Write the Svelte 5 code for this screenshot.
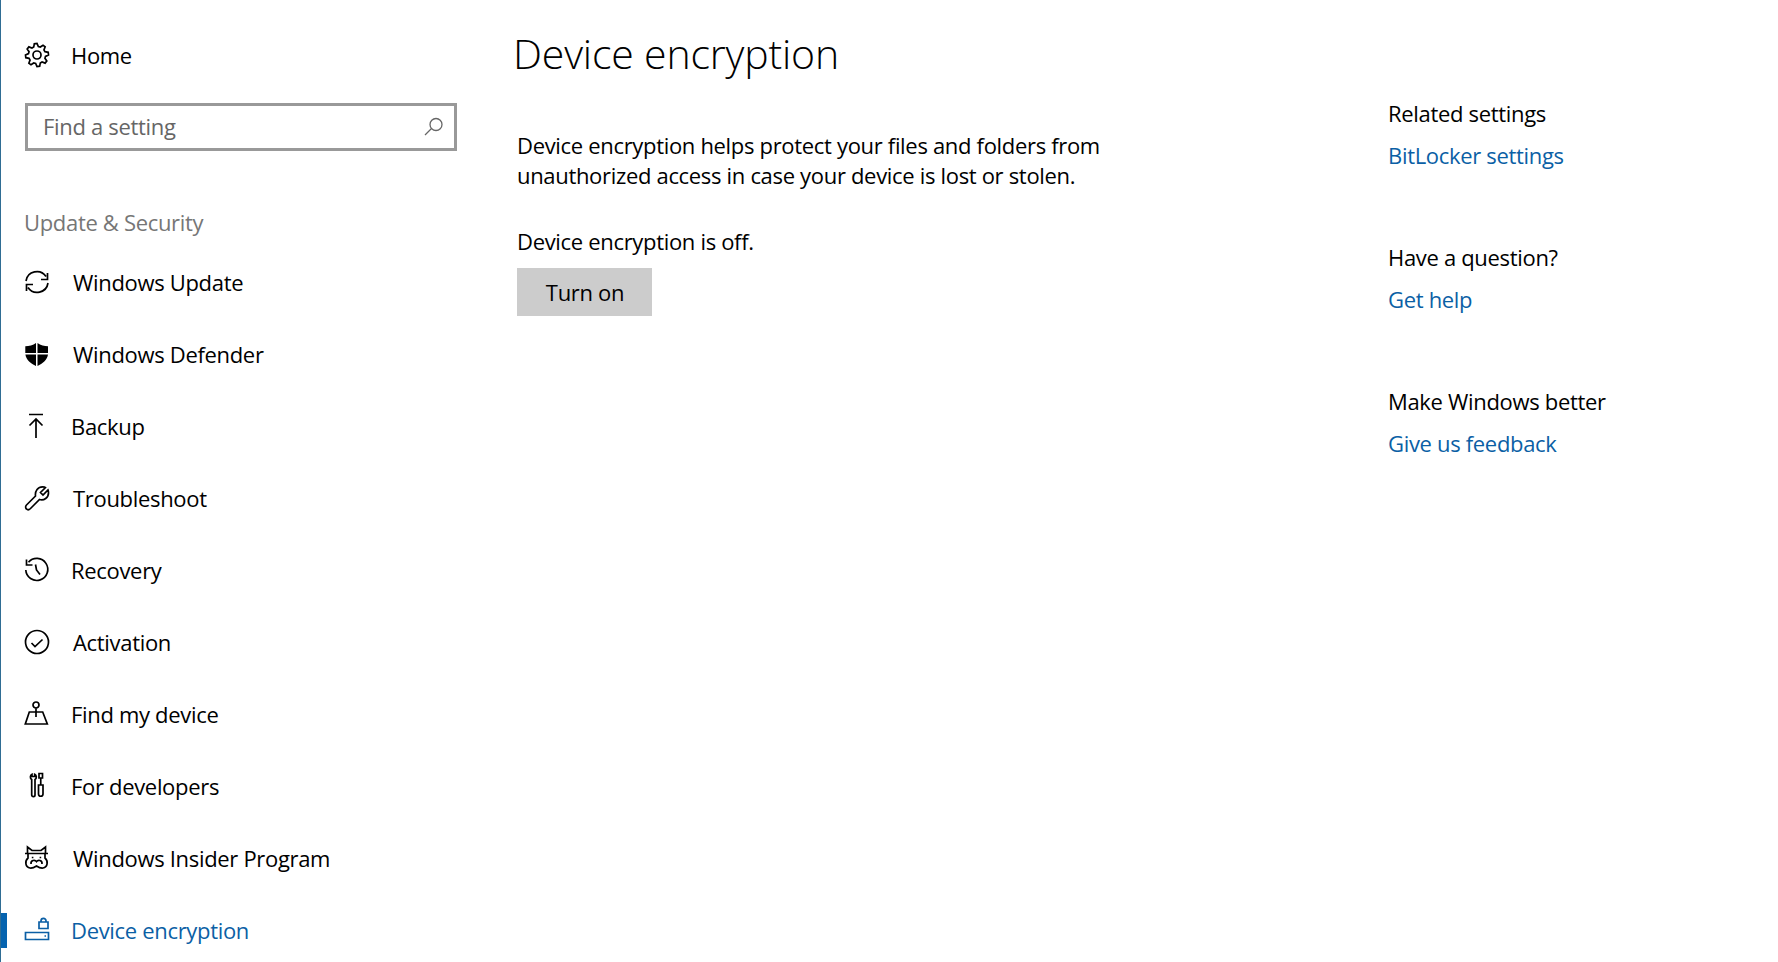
<script>
  // eight toothed gear outline, box is 24x24
  function gearPath(cx, cy, outer, inner) {
    let d = '';
    for (let i = 0; i < 8; i++) {
      const a = (i * Math.PI) / 4 - Math.PI / 8;
      const step = Math.PI / 4;
      const pts = [
        [inner, a + step * 0.0],
        [outer, a + step * 0.2],
        [outer, a + step * 0.5],
        [inner, a + step * 0.7]
      ];
      for (const [r, t] of pts) {
        const x = (cx + r * Math.cos(t)).toFixed(2);
        const y = (cy + r * Math.sin(t)).toFixed(2);
        d += (d ? 'L' : 'M') + x + ' ' + y;
      }
    }
    return d + 'Z';
  }

  const nav = [
    { label: 'Windows Update', tx: 1, d: 'M1 11A11 11 0 0 1 21 6.5M22.5 3V9.5H16M23 13A11 11 0 0 1 3 17.5M1.5 21V14.5H8' },
    { label: 'Windows Defender', tx: 1, solid: true, d: 'M11 1C8 3.2 4 4.3 .3 4.3V11H11ZM12.5 1C15.5 3.2 19.5 4.3 23 4.3V11H12.5ZM.4 12.5C1.2 18 6 21.5 11 24V12.5ZM12.5 12.5V24C17.5 21.5 22.2 18 23 12.5Z' },
    { label: 'Backup', tx: 0, d: 'M4 .5H18M11 5V24M4.5 11.5L11 5L17.5 11.5' },
    { label: 'Troubleshoot', tx: 1, d: 'M1.5 19L10.5 10C9.8 5 13 .8 17.5 .8C18.8 .8 20 1 20.5 1.5L15.5 6.5L18 9L23 4C23.5 5 23.5 6 23.5 7C23.5 11.5 19 15 14.5 13.5L5.5 22.5C4 24 2.5 24 1.5 23C.3 22 .3 20.3 1.5 19Z' },
    { label: 'Recovery', tx: 0, d: 'M3.5 4.2A11 11 0 1 1 .8 12M1.5 1.5V7H7.5M10.5 6.5L11.5 12L15 16.5' },
    { label: 'Activation', tx: 1, d: 'M23.5 12A11.5 11.5 0 1 1 .5 12A11.5 11.5 0 1 1 23.5 12ZM6.5 13L10 16.5L17.5 9.5' },
    { label: 'Find my device', tx: 0, d: 'M14 3A3 3 0 1 1 8 3A3 3 0 1 1 14 3ZM11 6V15M4.3 10H17.7L22.3 22H.3Z' },
    { label: 'For developers', tx: 0, d: 'M6.7 5.5C4.8 4.5 5 1 7 .2V2.5H9.7V.2C11.7 1 11.9 4.5 10 5.5V21A1.65 1.65 0 0 1 6.7 21ZM14 -.5H17.5V4H14ZM15.75 4V11M13.5 11H18V20A2.25 2.25 0 0 1 13.5 20Z' },
    { label: 'Windows Insider Program', tx: 1, d: 'M2.5 7.5V1L7 4.5H16L20.5 1V7.5M0 7.5H23M3 8V12C-.5 15 .3 21.5 5 22C7.5 22.3 9.5 21.3 11.5 20C13.5 21.3 15.5 22.3 18 22C22.7 21.5 23.5 15 20 12V8M6 18C5.5 14 10 13.5 11.5 15.5C13 13.5 17.5 14 17 18M6.8 11.5H8.4M14.6 11.5H16.2' },
    { label: 'Device encryption', tx: 0, active: true, d: 'M.5 14.5H23.5V21.5H.5ZM14 4H23V10.5H14ZM16 4V2.8A2.5 2.5 0 0 1 21 2.8V4M19.5 18H21' }
  ];

  const related = [
    { title: 'Related settings', link: 'BitLocker settings' },
    { title: 'Have a question?', link: 'Get help' },
    { title: 'Make Windows better', link: 'Give us feedback' }
  ];
</script>

<div class="page">
  <aside class="sidebar">
    <div class="home">
      <svg class="icon" viewBox="0 0 24 24">
        <path d={gearPath(12, 12, 11.5, 8.6)} />
        <circle cx="12" cy="12" r="4" />
      </svg>
      <span>Home</span>
    </div>

    <div class="search">
      <input placeholder="Find a setting" />
      <svg viewBox="0 0 20 20">
        <circle cx="12" cy="7.5" r="6" />
        <path d="M7.5 11.5L1 18" />
      </svg>
    </div>

    <div class="section">Update &amp; Security</div>

    <nav>
      {#each nav as item}
        <a class="item" class:active={item.active} class:shift={item.tx} href="#top">
          <svg class="icon" class:solid={item.solid} viewBox="0 0 24 24"><path d={item.d} /></svg>
          <span>{item.label}</span>
        </a>
      {/each}
    </nav>
  </aside>

  <main>
    <h1>Device encryption</h1>
    <p class="intro">Device encryption helps protect your files and folders from<br />unauthorized access in case your device is lost or stolen.</p>
    <p class="status">Device encryption is off.</p>
    <button class="btn">Turn on</button>
  </main>

  <aside class="related">
    {#each related as group}
      <div class="group">
        <div class="title">{group.title}</div>
        <a class="link" href="#top">{group.link}</a>
      </div>
    {/each}
  </aside>
</div>

<style>
  :global(body) { background: #fff; overflow: hidden; }

  .page {
    display: flex;
    height: 962px;
    overflow: hidden;
    font-family: "Open Sans", "Noto Sans", sans-serif;
    font-size: 22px;
    letter-spacing: -0.32px;
    color: #000;
    border-left: 1px solid #2f6d94;
    box-sizing: border-box;
  }

  .sidebar {
    width: 489px;
    flex: none;
    padding: 19px 0 0 24px;
    box-sizing: border-box;
  }

  .home, .item {
    display: flex;
    align-items: center;
    height: 72px;
    gap: 22px;
  }

  .icon {
    width: 24px;
    height: 24px;
    flex: none;
    overflow: visible;
    fill: none;
    stroke: currentColor;
    stroke-width: 1.7;
  }
  .icon.solid { fill: currentColor; stroke: none; }

  .search {
    display: flex;
    align-items: center;
    width: 432px;
    height: 48px;
    margin-top: 12px;
    border: 3px solid #999;
    box-sizing: border-box;
    padding-right: 10px;
  }
  .search input {
    flex: 1;
    min-width: 0;
    border: 0;
    outline: 0;
    padding: 0 0 2px 15px;
    font: inherit;
    letter-spacing: inherit;
    background: transparent;
  }
  .search input::placeholder { color: #666; opacity: 1; }
  .search svg {
    width: 20px;
    height: 20px;
    fill: none;
    stroke: #666;
    stroke-width: 1.3;
  }

  .section {
    margin: 56px 0 9px -1px;
    line-height: 30px;
    color: #767676;
  }

  .item {
    position: relative;
    color: #000;
    text-decoration: none;
  }
  .item.shift { gap: 24px; }
  .item.active { color: #0b5fa5; }
  .item.active::before {
    content: "";
    position: absolute;
    left: -25px;
    top: 19px;
    width: 7px;
    height: 35px;
    background: #0563af;
  }

  main {
    flex: none;
    width: 874px;
    padding: 0 0 0 24px;
    box-sizing: border-box;
  }

  h1 {
    margin: 26px 0 0 -1px;
    font-size: 41px;
    font-weight: 300;
    line-height: 54px;
    letter-spacing: -0.17px;
  }

  p { margin: 0 0 0 3px; line-height: 30px; }
  .intro { margin-top: 50px; }
  .status { margin-top: 36px; }

  .btn {
    display: block;
    width: 135px;
    height: 48px;
    margin: 12px 0 0 3px;
    border: 0;
    padding: 0 0 0 1px;
    background: #ccc;
    font: inherit;
    letter-spacing: inherit;
    color: #000;
  }

  .related {
    padding-top: 98px;
    padding-left: 24px;
  }
  .group { height: 144px; }
  .title { line-height: 30px; }
  .link {
    display: block;
    margin-top: 12px;
    line-height: 30px;
    color: #0b5fa5;
    text-decoration: none;
  }
</style>
